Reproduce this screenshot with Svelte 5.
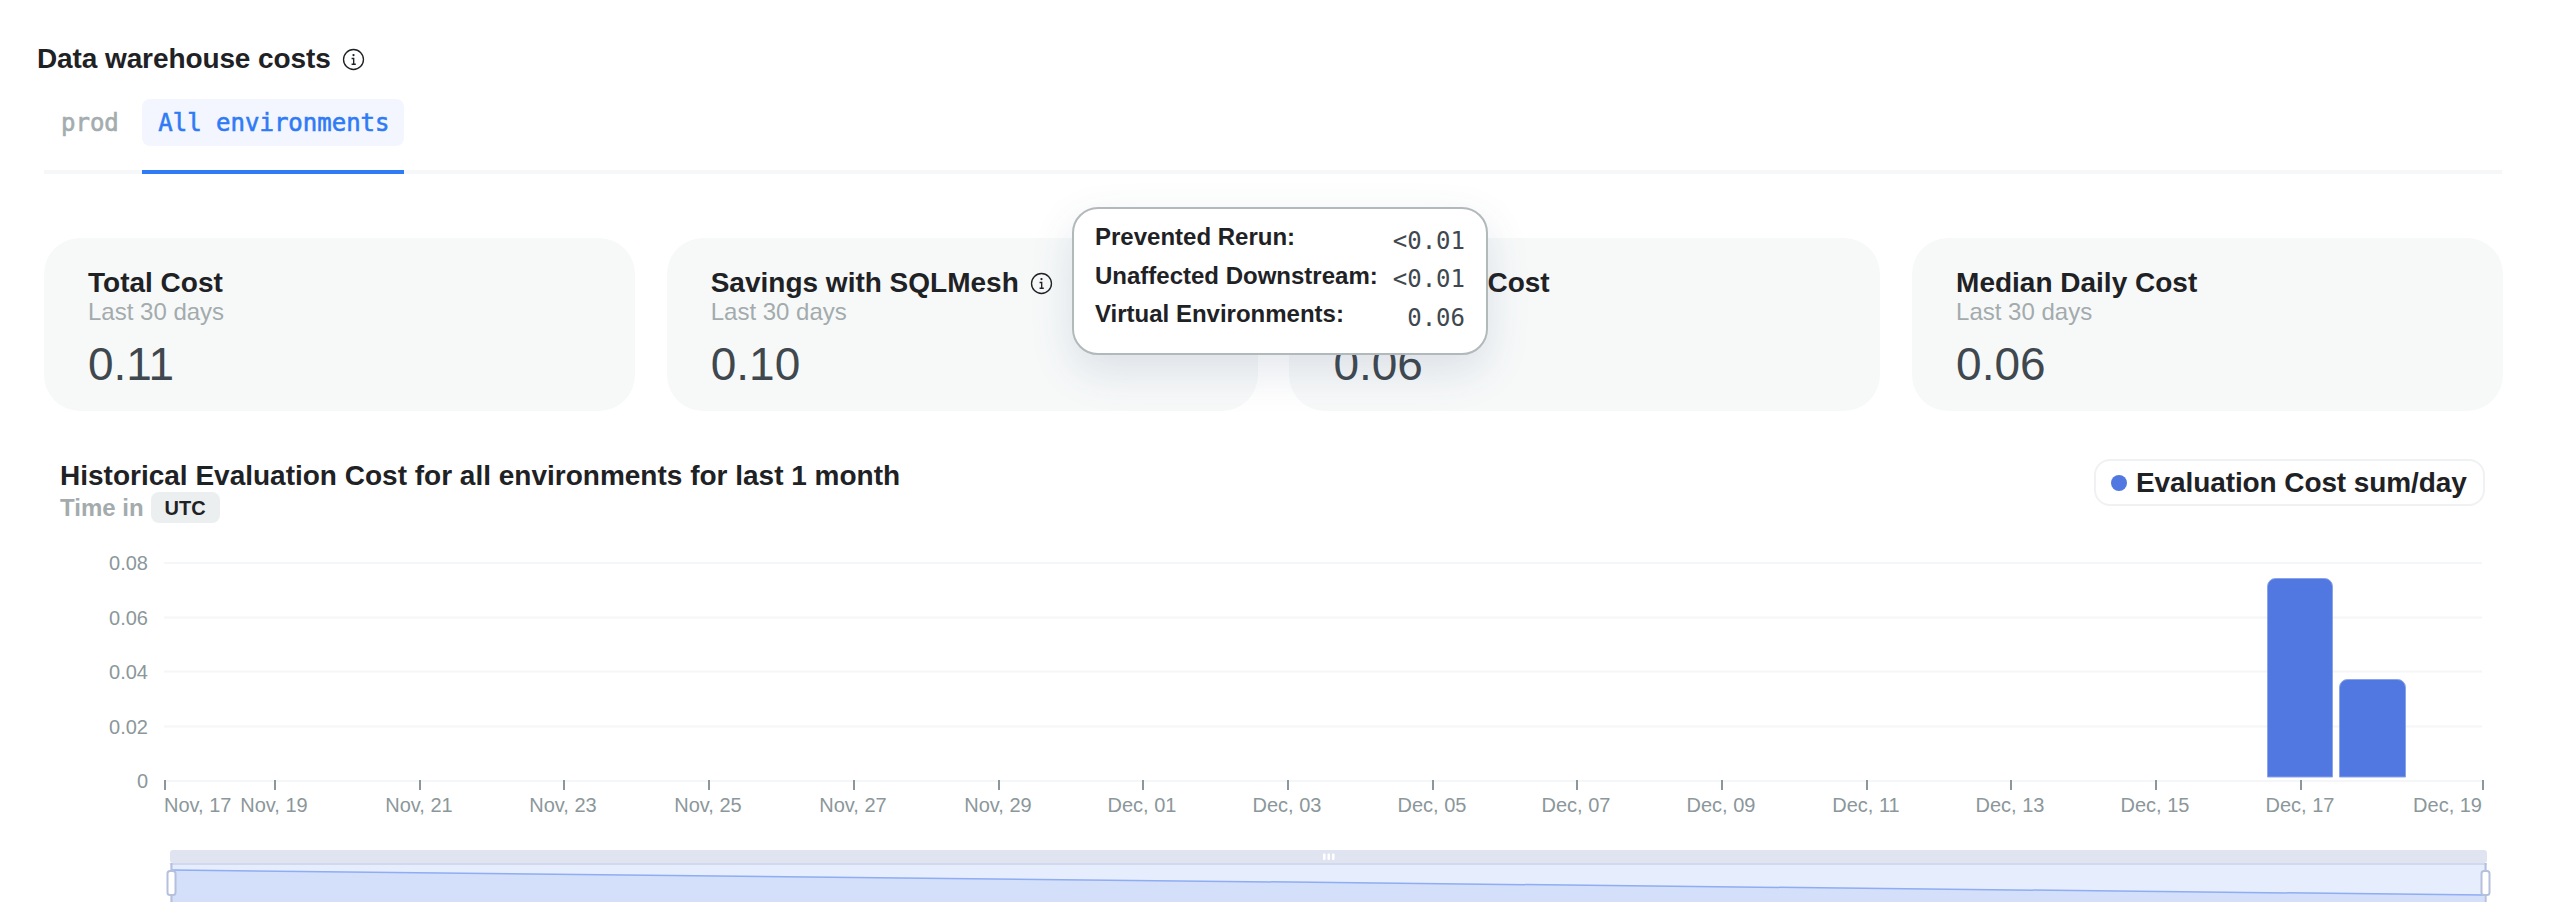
<script>
  const cards = [
    { title: 'Total Cost', value: '0.11' },
    { title: 'Savings with SQLMesh', value: '0.10', info: true },
    { title: 'Mean Daily Cost', value: '0.06' },
    { title: 'Median Daily Cost', value: '0.06' }
  ];
  const rows = [
    ['Prevented Rerun:', '<0.01'],
    ['Unaffected Downstream:', '<0.01'],
    ['Virtual Environments:', '0.06']
  ];
  const yTicks = [['0.08', 563], ['0.06', 617.5], ['0.04', 671.5], ['0.02', 726.5], ['0', 781]];
  const names = ['Nov, 19','Nov, 21','Nov, 23','Nov, 25','Nov, 27','Nov, 29','Dec, 01','Dec, 03','Dec, 05','Dec, 07','Dec, 09','Dec, 11','Dec, 13','Dec, 15','Dec, 17'];
  const xTicks = names.map((n, i) => ({ n, x: Math.round(275 + i * 144.7) }));
</script>

<div class="page">
  <div class="heading">
    <h1>Data warehouse costs</h1>
    <svg class="info" viewBox="0 0 24 24"><circle cx="12" cy="12" r="10.4"/><path d="M10 11h2.2v6M10 17h4.4"/><circle class="dot" cx="12" cy="7.4" r="1.2"/></svg>
  </div>

  <div class="tabs">
    <div class="tab">prod</div>
    <div class="tab active"><span>All environments</span></div>
  </div>

  <div class="cards">
    {#each cards as c}
      <section class="card">
        <div class="card-title">{c.title}{#if c.info}<svg class="info" viewBox="0 0 24 24"><circle cx="12" cy="12" r="10.4"/><path d="M10 11h2.2v6M10 17h4.4"/><circle class="dot" cx="12" cy="7.4" r="1.2"/></svg>{/if}</div>
        <div class="card-sub">Last 30 days</div>
        <div class="card-value">{c.value}</div>
      </section>
    {/each}
  </div>

  <div class="tooltip">
    {#each rows as r}
      <div class="row"><span class="lbl">{r[0]}</span><span class="val">{r[1]}</span></div>
    {/each}
  </div>

  <div class="chart-head">
    <div>
      <h2>Historical Evaluation Cost for all environments for last 1 month</h2>
      <div class="tz">Time in <span class="badge">UTC</span></div>
    </div>
    <div class="legend"><i></i>Evaluation Cost sum/day</div>
  </div>

  <svg class="chart" width="2566" height="384" viewBox="0 540 2566 384">
    {#each yTicks as t}
      <line class="grid" x1="164" x2="2482" y1={t[1]} y2={t[1]} />
      <text class="axis" x="148" y={t[1] + 7} text-anchor="end">{t[0]}</text>
    {/each}
    <path class="bar" d="M2267.5 777V586.5a8 8 0 0 1 8-8h49a8 8 0 0 1 8 8v190.500z" />
    <path class="bar" d="M2339.500 777V687.500a8 8 0 0 1 8-8h50a8 8 0 0 1 8 8v89.500z" />
    <line class="tick" x1="165" x2="165" y1="780" y2="790" />
    <line class="tick" x1="2483" x2="2483" y1="780" y2="790" />
    <text class="axis" x="164" y="812">Nov, 17</text>
    <text class="axis" x="2482" y="812" text-anchor="end">Dec, 19</text>
    {#each xTicks as t}
      <line class="tick" x1={t.x} x2={t.x} y1="780" y2="790" />
      <text class="axis" x={t.x - 1} y="812" text-anchor="middle">{t.n}</text>
    {/each}

    <rect x="170" y="850" width="2317" height="13" rx="3" fill="#dfe4f0" />
    <rect x="170" y="863" width="2317" height="39" fill="#e6edfd" />
    <rect x="170" y="863" width="2317" height="2" fill="#d3d9ec" />
    <path d="M172 870L2484 895V902H172z" fill="#d4dffa" />
    <path d="M172 870L2484 895" stroke="#8fadf2" stroke-width="1.5" fill="none" />
    <rect x="1323" y="853.5" width="2.5" height="6.5" rx="1" fill="#fff" />
    <rect x="1327.5" y="853.5" width="2.5" height="6.5" rx="1" fill="#fff" />
    <rect x="1332" y="853.5" width="2.5" height="6.5" rx="1" fill="#fff" />
    <line class="hline" x1="171.5" x2="171.5" y1="863" y2="902" />
    <line class="hline" x1="2485.5" x2="2485.5" y1="863" y2="902" />
    <rect class="handle" x="167.5" y="871" width="8" height="24" rx="2.5" />
    <rect class="handle" x="2481.5" y="871" width="8" height="24" rx="2.5" />
  </svg>
</div>

<style>
  :global(body) { margin: 0; background: #fff; }
  .page {
    position: relative;
    width: 2566px;
    height: 924px;
    overflow: hidden;
    box-sizing: border-box;
    padding: 42px 64px 0 44px;
    font-family: "Liberation Sans", Arial, sans-serif;
    color: #1f2225;
  }
  h1, h2 { margin: 0; font-size: 28px; font-weight: 700; line-height: 34px; }
  h1 { letter-spacing: -0.1px; }
  .heading { display: flex; align-items: center; gap: 11px; margin-left: -7px; }
  .info { fill: none; stroke: #1f2225; stroke-width: 1.4; width: 23px; height: 23px; flex: none; }
  .info .dot { fill: #1f2225; stroke: none; }

  .tabs { display: flex; margin-top: 23px; height: 71px; border-bottom: 4px solid #f6f7f8; align-items: flex-start; }
  .tab {
    box-sizing: border-box;
    font-family: "DejaVu Sans Mono", monospace;
    font-size: 24px;
    -webkit-text-stroke: 0.6px currentColor;
    white-space: nowrap;
    line-height: 49px;
    height: 47px;
    padding: 0 16px;
    color: #a3acae;
    margin-right: 8px;
  }
  .tab:first-child { margin-left: 1px; margin-right: 7.5px; }
  .active { position: relative; color: #2f7bf6; background: #f3f6fe; border-radius: 8px; width: 262px; margin: 0; }
  .active::after { content: ""; position: absolute; left: 0; right: 0; top: 71px; height: 4px; background: #2f7bf6; }

  .cards { display: grid; grid-template-columns: repeat(4, 591px); gap: 31.7px; margin-top: 64px; }
  .card { height: 173px; box-sizing: border-box; background: #f7f9f9; border-radius: 36px; padding: 28px 44px 0; }
  .card-title { display: flex; align-items: center; gap: 11px; font-size: 28px; font-weight: 700; line-height: 34px; }
  .card-sub { font-size: 24px; line-height: 24px; color: #a3abad; }
  .card-value { font-size: 46px; line-height: 52px; margin-top: 14px; color: #3f484e; font-kerning: normal; text-rendering: optimizeLegibility; }

  .tooltip {
    position: absolute;
    left: 1072px;
    top: 207px;
    width: 416px;
    height: 148px;
    box-sizing: border-box;
    padding: 9px 21px 0 21px;
    background: #fff;
    border: 2px solid #b2b9bb;
    border-radius: 26px;
    box-shadow: 0 16px 44px rgba(60, 80, 120, 0.14);
  }
  .row { display: flex; justify-content: space-between; height: 38.5px; align-items: center; font-size: 24px; font-weight: 700; }
  .val { font-family: "DejaVu Sans Mono", monospace; font-weight: 400; color: #3f484e; padding-top: 7px; }

  .chart-head { display: flex; justify-content: space-between; align-items: flex-start; margin-top: 48px; padding-left: 16px; padding-right: 17px; }
  .tz { display: flex; align-items: center; gap: 7px; font-size: 24px; font-weight: 700; color: #a3abad; margin-top: -1px; line-height: 31px; }
  .badge { background: #eceff0; color: #1f2225; font-size: 20px; border-radius: 8px; padding: 0 14px; line-height: 33px; height: 31px; }
  .legend {
    display: flex; align-items: center; gap: 9px;
    width: 391.5px; height: 47px; box-sizing: border-box;
    padding: 1px 0 0 15.5px;
    border: 2px solid #f0f1f2; border-radius: 16px;
    font-size: 28px; font-weight: 700; letter-spacing: -0.1px;
  }
  .legend i { width: 16px; height: 16px; border-radius: 50%; background: #5078e0; }

  .chart { position: absolute; left: 0; top: 540px; display: block; }
  .grid { stroke: #f5f6f7; stroke-width: 2; }
  .axis { font-size: 20px; fill: #8b979a; font-family: "Liberation Sans", Arial, sans-serif; }
  .tick { stroke: #8b979a; stroke-width: 2; }
  .bar { fill: #5078e0; stroke: #8aa3ea; stroke-width: 1; }
  .hline { stroke: #b4c0dc; stroke-width: 2; }
  .handle { fill: #fff; stroke: #b4c0dc; stroke-width: 2; }
</style>
